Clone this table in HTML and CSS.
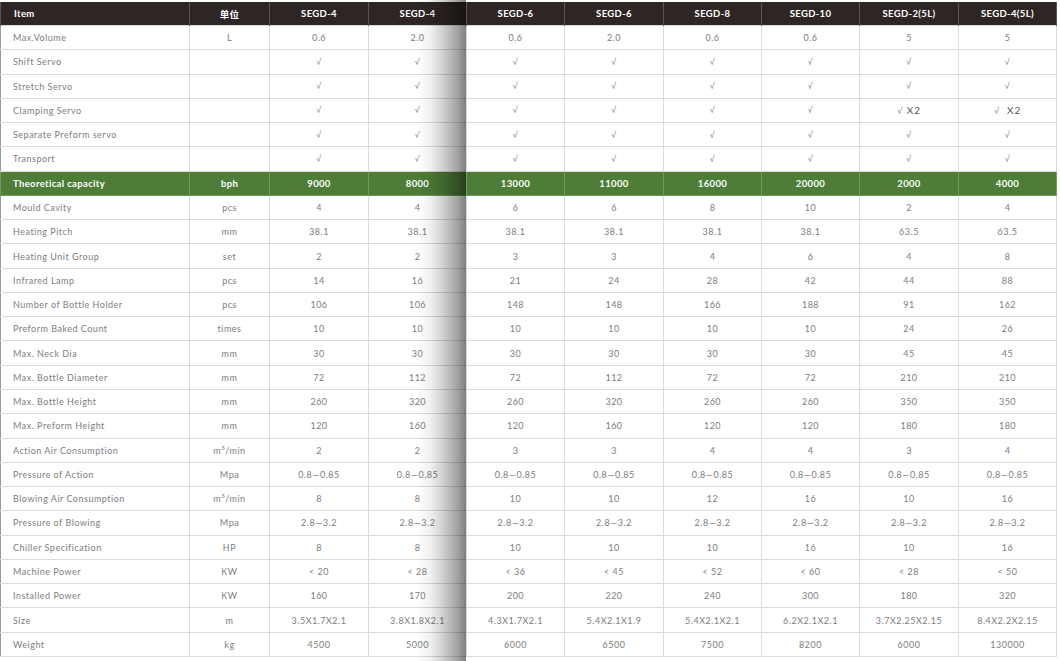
FILE: index.html
```html
<!DOCTYPE html>
<html>
<head>
<meta charset="utf-8">
<link rel="stylesheet" href="styles.css">
</head>
<body>
<div class="page">
<table class="spec">
<colgroup>
<col class="c-item"><col class="c-unit"><col class="c-a"><col class="c-b"><col class="c-b"><col class="c-a"><col class="c-b"><col class="c-b"><col class="c-a"><col class="c-b">
</colgroup>
<thead>
<tr><th class="first">Item</th><th>单位</th><th>SEGD-4</th><th>SEGD-4</th><th>SEGD-6</th><th>SEGD-6</th><th>SEGD-8</th><th>SEGD-10</th><th>SEGD-2(5L)</th><th>SEGD-4(5L)</th></tr>
</thead>
<tbody>
<tr><td>Max.Volume</td><td>L</td><td>0.6</td><td>2.0</td><td>0.6</td><td>2.0</td><td>0.6</td><td>0.6</td><td>5</td><td>5</td></tr>
<tr><td>Shift Servo</td><td></td><td class="ck">√</td><td class="ck">√</td><td class="ck">√</td><td class="ck">√</td><td class="ck">√</td><td class="ck">√</td><td class="ck">√</td><td class="ck">√</td></tr>
<tr><td>Stretch Servo</td><td></td><td class="ck">√</td><td class="ck">√</td><td class="ck">√</td><td class="ck">√</td><td class="ck">√</td><td class="ck">√</td><td class="ck">√</td><td class="ck">√</td></tr>
<tr><td>Clamping Servo</td><td></td><td class="ck">√</td><td class="ck">√</td><td class="ck">√</td><td class="ck">√</td><td class="ck">√</td><td class="ck">√</td><td class="x2"><span class="ckm">√</span> X2</td><td class="x2"><span class="ckm">√</span>&nbsp;&nbsp;X2</td></tr>
<tr><td>Separate Preform servo</td><td></td><td class="ck">√</td><td class="ck">√</td><td class="ck">√</td><td class="ck">√</td><td class="ck">√</td><td class="ck">√</td><td class="ck">√</td><td class="ck">√</td></tr>
<tr><td>Transport</td><td></td><td class="ck">√</td><td class="ck">√</td><td class="ck">√</td><td class="ck">√</td><td class="ck">√</td><td class="ck">√</td><td class="ck">√</td><td class="ck">√</td></tr>
<tr class="hl"><td>Theoretical capacity</td><td>bph</td><td>9000</td><td>8000</td><td>13000</td><td>11000</td><td>16000</td><td>20000</td><td>2000</td><td>4000</td></tr>
<tr><td>Mould Cavity</td><td>pcs</td><td>4</td><td>4</td><td>6</td><td>6</td><td>8</td><td>10</td><td>2</td><td>4</td></tr>
<tr><td>Heating Pitch</td><td>mm</td><td>38.1</td><td>38.1</td><td>38.1</td><td>38.1</td><td>38.1</td><td>38.1</td><td>63.5</td><td>63.5</td></tr>
<tr><td>Heating Unit Group</td><td>set</td><td>2</td><td>2</td><td>3</td><td>3</td><td>4</td><td>6</td><td>4</td><td>8</td></tr>
<tr><td>Infrared Lamp</td><td>pcs</td><td>14</td><td>16</td><td>21</td><td>24</td><td>28</td><td>42</td><td>44</td><td>88</td></tr>
<tr><td>Number of Bottle Holder</td><td>pcs</td><td>106</td><td>106</td><td>148</td><td>148</td><td>166</td><td>188</td><td>91</td><td>162</td></tr>
<tr><td>Preform Baked Count</td><td>times</td><td>10</td><td>10</td><td>10</td><td>10</td><td>10</td><td>10</td><td>24</td><td>26</td></tr>
<tr><td>Max. Neck Dia</td><td>mm</td><td>30</td><td>30</td><td>30</td><td>30</td><td>30</td><td>30</td><td>45</td><td>45</td></tr>
<tr><td>Max. Bottle Diameter</td><td>mm</td><td>72</td><td>112</td><td>72</td><td>112</td><td>72</td><td>72</td><td>210</td><td>210</td></tr>
<tr><td>Max. Bottle Height</td><td>mm</td><td>260</td><td>320</td><td>260</td><td>320</td><td>260</td><td>260</td><td>350</td><td>350</td></tr>
<tr><td>Max. Preform Height</td><td>mm</td><td>120</td><td>160</td><td>120</td><td>160</td><td>120</td><td>120</td><td>180</td><td>180</td></tr>
<tr><td>Action Air Consumption</td><td>m<sup>3</sup>/min</td><td>2</td><td>2</td><td>3</td><td>3</td><td>4</td><td>4</td><td>3</td><td>4</td></tr>
<tr><td>Pressure of Action</td><td>Mpa</td><td>0.8—0.85</td><td>0.8—0.85</td><td>0.8—0.85</td><td>0.8—0.85</td><td>0.8—0.85</td><td>0.8—0.85</td><td>0.8—0.85</td><td>0.8—0.85</td></tr>
<tr><td>Blowing Air Consumption</td><td>m<sup>3</sup>/min</td><td>8</td><td>8</td><td>10</td><td>10</td><td>12</td><td>16</td><td>10</td><td>16</td></tr>
<tr><td>Pressure of Blowing</td><td>Mpa</td><td>2.8—3.2</td><td>2.8—3.2</td><td>2.8—3.2</td><td>2.8—3.2</td><td>2.8—3.2</td><td>2.8—3.2</td><td>2.8—3.2</td><td>2.8—3.2</td></tr>
<tr><td>Chiller Specification</td><td>HP</td><td>8</td><td>8</td><td>10</td><td>10</td><td>10</td><td>16</td><td>10</td><td>16</td></tr>
<tr><td>Machine Power</td><td>KW</td><td>&lt; 20</td><td>&lt; 28</td><td>&lt; 36</td><td>&lt; 45</td><td>&lt; 52</td><td>&lt; 60</td><td>&lt; 28</td><td>&lt; 50</td></tr>
<tr><td>Installed Power</td><td>KW</td><td>160</td><td>170</td><td>200</td><td>220</td><td>240</td><td>300</td><td>180</td><td>320</td></tr>
<tr><td>Size</td><td>m</td><td>3.5X1.7X2.1</td><td>3.8X1.8X2.1</td><td>4.3X1.7X2.1</td><td>5.4X2.1X1.9</td><td>5.4X2.1X2.1</td><td>6.2X2.1X2.1</td><td>3.7X2.25X2.15</td><td>8.4X2.2X2.15</td></tr>
<tr><td>Weight</td><td>kg</td><td>4500</td><td>5000</td><td>6000</td><td>6500</td><td>7500</td><td>8200</td><td>6000</td><td>130000</td></tr>
</tbody>
</table>
<div class="fold"></div>
</div>
</body>
</html>
```
FILE: styles.css
```css
html, body {
  margin: 0;
  padding: 0;
  background: #ffffff;
}
.page {
  position: relative;
  width: 1060px;
  height: 661px;
  padding-top: 2px;
  box-sizing: border-box;
  overflow: hidden;
  font-family: Lato, "Noto Sans CJK SC", sans-serif;
}
.spec {
  border-collapse: collapse;
  table-layout: fixed;
  width: 1057px;
}
.c-item { width: 189px; }
.c-unit { width: 80px; }
.c-a { width: 99px; }
.c-b { width: 98px; }
.spec th {
  height: 23px;
  padding: 0;
  background: #2e2624;
  color: #ffffff;
  font-size: 9.5px;
  font-weight: 700;
  letter-spacing: 0.35px;
  text-align: center;
  border-left: 1px solid #5e5654;
  border-right: 1px solid #5e5654;
}
.spec th.first {
  text-align: left;
  padding-left: 13px;
}
.spec td {
  height: 23.28px;
  padding: 0;
  border: 1px solid #dadada;
  color: #7d7d7d;
  font-size: 9px;
  letter-spacing: 0.5px;
  text-align: center;
  white-space: nowrap;
}
.spec td:first-child {
  text-align: left;
  padding-left: 12px;
  border-left: 1px solid #9a9a9a;
}
.spec td.ck,
.spec .ckm {
  color: #8e8e8e;
  font-size: 8.5px;
}
.spec td.x2 {
  color: #555555;
  font-size: 10px;
  letter-spacing: 0.9px;
}
.spec sup {
  font-size: 6px;
  vertical-align: 4px;
  line-height: 0;
}
.spec tr.hl td {
  background: #4d7d37;
  color: #ffffff;
  font-weight: 700;
  font-size: 9.5px;
  letter-spacing: 0.35px;
  border-color: #6f9a5c;
}
.fold {
  position: absolute;
  top: 0;
  bottom: 0;
  left: 418px;
  width: 48px;
  background: linear-gradient(to right,
    rgba(0, 0, 0, 0) 0%,
    rgba(0, 0, 0, 0.06) 25%,
    rgba(0, 0, 0, 0.2) 55%,
    rgba(0, 0, 0, 0.38) 85%,
    rgba(0, 0, 0, 0.5) 100%);
  pointer-events: none;
}
```
